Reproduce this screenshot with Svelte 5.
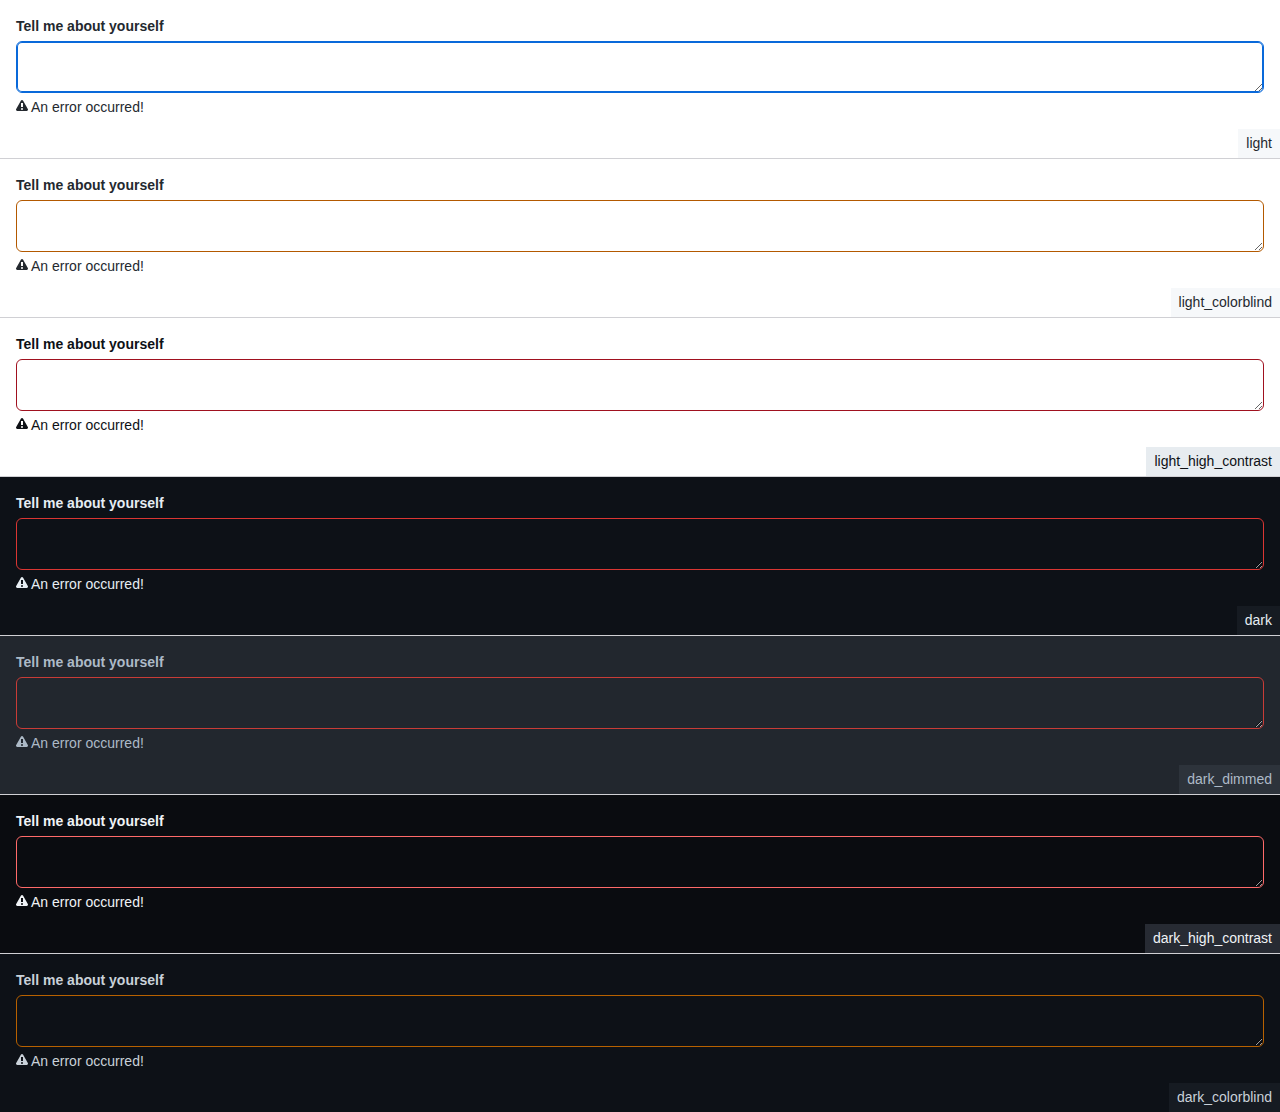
<script>
  const themes = [
    { name: 'light', focused: true },
    { name: 'light_colorblind' },
    { name: 'light_high_contrast' },
    { name: 'dark' },
    { name: 'dark_dimmed' },
    { name: 'dark_high_contrast' },
    { name: 'dark_colorblind' }
  ];
</script>

<main>
  {#each themes as theme (theme.name)}
    <section class="theme {theme.name}">
      <div class="field">
        <label for="about-{theme.name}">Tell me about yourself</label>
        <textarea
          id="about-{theme.name}"
          class:focused={theme.focused}
          aria-invalid="true"
          aria-describedby="error-{theme.name}"
        ></textarea>
        <p class="error" id="error-{theme.name}">
          <svg width="12" height="12" viewBox="0 0 12 12" aria-hidden="true">
            <path
              fill="currentColor"
              fill-rule="evenodd"
              d="M4.855.708c.5-.896 1.79-.896 2.29 0l4.675 8.351a1.312 1.312 0 0 1-1.146 1.954H1.33A1.313 1.313 0 0 1 .183 9.058ZM7 7V3H5v4Zm-1 3a1 1 0 1 0 0-2 1 1 0 0 0 0 2Z"
            />
          </svg>
          <span>An error occurred!</span>
        </p>
      </div>
      <div class="tag">{theme.name}</div>
    </section>
  {/each}
</main>

<style>
  :global(body) {
    margin: 0;
    background: #fff;
  }

  main {
    font-family: 'Liberation Sans', Arial, sans-serif;
    font-size: 14px;
    line-height: 21px;
  }

  .theme {
    display: flex;
    flex-direction: column;
    color: var(--fg);
    background: var(--bg);
    border-bottom: 1px solid #d0d0d4;
  }

  .theme:last-child {
    border-bottom: 0;
  }

  .field {
    display: flex;
    flex-direction: column;
    gap: 4px;
    padding: 16px 16px 11px;
  }

  label {
    align-self: flex-start;
    font-weight: 700;
  }

  textarea {
    display: block;
    box-sizing: border-box;
    width: 100%;
    height: 52px;
    margin: 0;
    padding: 4px 12px;
    font: inherit;
    color: inherit;
    background: var(--bg);
    border: 1px solid var(--invalid);
    border-radius: 6px;
    outline: none;
    resize: both;
  }

  textarea:focus,
  textarea.focused {
    border-color: #0969da;
    box-shadow: inset 0 0 0 1px #0969da;
  }

  .error {
    display: flex;
    gap: 3px;
    margin: 0;
  }

  .error svg {
    display: block;
    margin-top: 3px;
  }

  .tag {
    align-self: flex-end;
    padding: 4px 8px;
    background: var(--tag);
  }

  .light {
    --fg: #24292f;
    --bg: #ffffff;
    --tag: #f6f8fa;
    --invalid: #cf222e;
  }

  .light_colorblind {
    --fg: #24292f;
    --bg: #ffffff;
    --tag: #f6f8fa;
    --invalid: #b35900;
  }

  .light_high_contrast {
    --fg: #0e1116;
    --bg: #ffffff;
    --tag: #e7ecf0;
    --invalid: #a0111f;
  }

  .dark {
    --fg: #e6edf3;
    --bg: #0d1117;
    --tag: #161b22;
    --invalid: #da3633;
    color-scheme: dark;
  }

  .dark_dimmed {
    --fg: #adbac7;
    --bg: #22272e;
    --tag: #2d333b;
    --invalid: #c93c37;
    color-scheme: dark;
  }

  .dark_high_contrast {
    --fg: #f0f3f6;
    --bg: #0a0c10;
    --tag: #272b33;
    --invalid: #ff6a69;
    color-scheme: dark;
  }

  .dark_colorblind {
    --fg: #c9d1d9;
    --bg: #0d1117;
    --tag: #161b22;
    --invalid: #b76100;
    color-scheme: dark;
  }
</style>
